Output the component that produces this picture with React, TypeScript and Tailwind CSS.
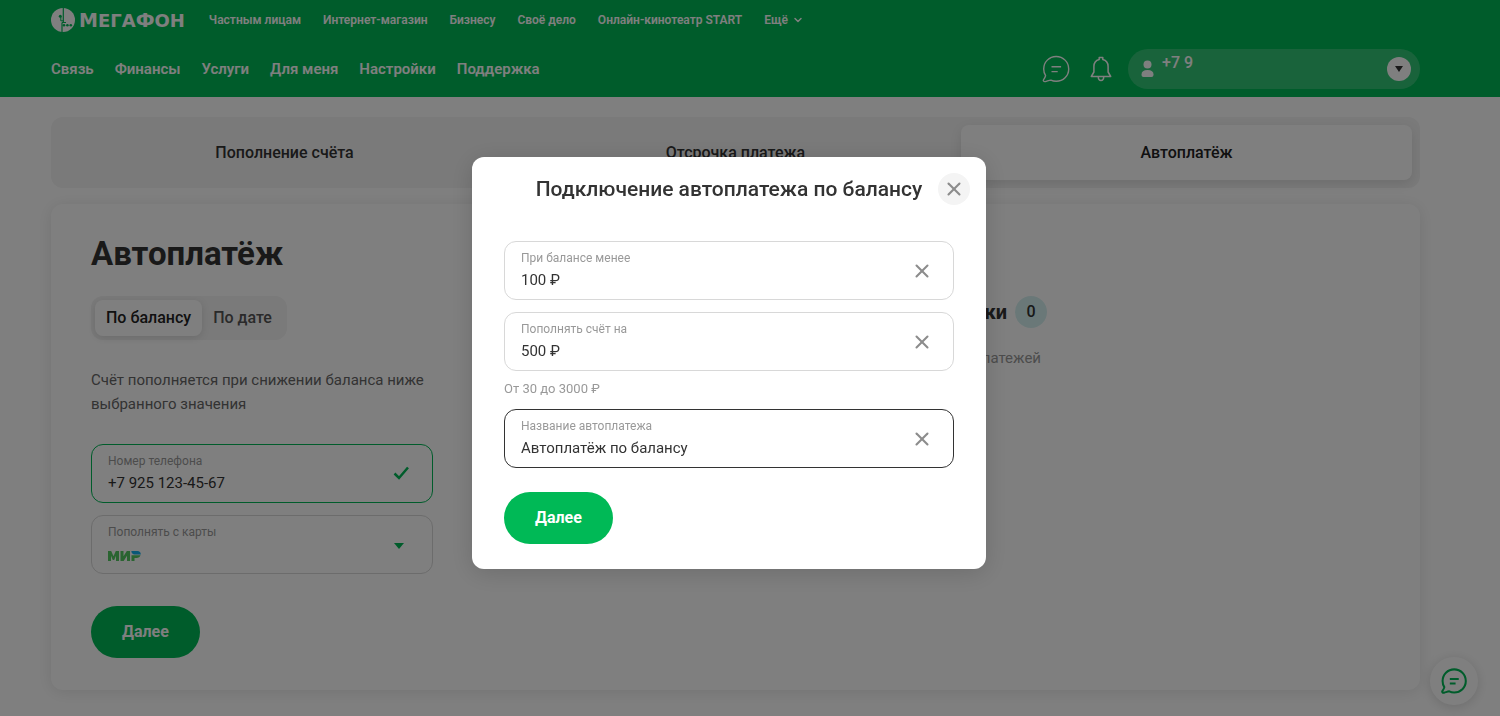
import { useState } from "react";
import { ChevronDown, X } from "lucide-react";

const siteLinks = [
  "Частным лицам",
  "Интернет-магазин",
  "Бизнесу",
  "Своё дело",
  "Онлайн-кинотеатр START",
];

const sections = [
  "Связь",
  "Финансы",
  "Услуги",
  "Для меня",
  "Настройки",
  "Поддержка",
];

const tabs = ["Пополнение счёта", "Отсрочка платежа", "Автоплатёж"];

function Logo() {
  return (
    <a href="#" aria-label="МегаФон" className="flex items-center gap-1 text-white">
      <svg viewBox="0 0 24 24" className="size-6">
        <circle cx="12" cy="12" r="12" fill="#fff" />
        <path
          d="M12.300 0v14.500M11 14.500v9.500M11 14.500h4"
          stroke="#00b956"
          strokeWidth="1.2"
          fill="none"
        />
        <circle cx="9.300" cy="8.300" r="1.500" fill="#00b956" />
        <path d="M9.800 9v3.800h2.500" stroke="#00b956" strokeWidth="1" fill="none" />
        <circle cx="13" cy="17.200" r="1.300" fill="#00b956" />
        <circle cx="16.400" cy="17.200" r="1.300" fill="#00b956" />
        <circle cx="19.800" cy="17.200" r="1.300" fill="#00b956" />
      </svg>
      <span className="font-['DejaVu_Sans',sans-serif] text-lg leading-6 font-bold">
        <span className="text-[19px] leading-6">М</span>ЕГА
        <span className="text-[19px] leading-6">Ф</span>ОН
      </span>
    </a>
  );
}

function ChatIcon({ className, strokeWidth }: { className: string; strokeWidth: number }) {
  return (
    <svg
      viewBox="0 0 28 28"
      className={className}
      fill="none"
      stroke="currentColor"
      strokeWidth={strokeWidth}
      strokeLinejoin="round"
    >
      <path d="M3.600 20.600C2.200 18.700 1.700 16.500 1.700 14 1.700 7 7.200 1.500 14.200 1.500S26.700 7 26.700 14 21.200 26.300 14.200 26.300c-1.900 0-3.700-.4-5.300-1.200-1.800.2-3.600 1-5.600 1.500-1.500.3-2.500-.9-1.700-2 .9-1.200 1.600-2.300 2-4Z" />
      <path d="M9.500 11.800h9.600M9.500 16.600h6.200" />
    </svg>
  );
}

function BellIcon() {
  return (
    <svg
      viewBox="0 0 22 26"
      className="h-[26px] w-[22px]"
      fill="none"
      stroke="currentColor"
      strokeWidth="1.5"
      strokeLinejoin="round"
    >
      <path d="M9.200 3.500V1.500h3.600v2c3.200.8 5.300 3.500 5.300 7v5.500l2.600 4.500H1.300L3.900 16v-5.500c0-3.500 2.100-6.200 5.300-7Z" />
      <path d="M8.300 20.800c0 2.300 1 3.700 2.700 3.700s2.700-1.400 2.700-3.700" />
    </svg>
  );
}

function MirLogo() {
  return (
    <svg viewBox="0 0 33 10" className="h-[10px] w-[33px]">
      <path
        d="M0 10V0h3.200l2.300 5.300L7.800 0H11v10H8V4.800L6.200 9H4.800L3 4.800V10ZM12.500 10V0h3v5.200L18.800 0H22v10h-3V4.800L15.700 10ZM23.500 10V4.300h9c-.6 1.700-2 2.700-4 2.700h-2v3Z"
        fill="#55c862"
      />
      <path d="M23.300 0h6.200c2 0 3.300 1.400 3.300 3.600h-6.300c-1.700 0-3-1.500-3.200-3.600Z" fill="#12b0ee" />
    </svg>
  );
}

interface ModalFieldProps {
  id: string;
  label: string;
  value: string;
  active?: boolean;
  onChange: (value: string) => void;
}

function ModalField({ id, label, value, active, onChange }: ModalFieldProps) {
  return (
    <div
      className={`flex h-[59px] items-center rounded-xl border pr-[18px] pl-4 ${
        active ? "border-[#333333]" : "border-[#d8d8d8]"
      }`}
    >
      <div className="flex-1">
        <label htmlFor={id} className="mb-0.5 block text-xs leading-4 text-[#999999]">
          {label}
        </label>
        <input
          id={id}
          type="text"
          value={value}
          onChange={(e) => onChange(e.target.value)}
          className="block h-6 w-full text-[15px] text-[#333333] outline-none"
        />
      </div>
      <button
        type="button"
        aria-label="Очистить"
        onClick={() => onChange("")}
        className="p-0.5 text-[#8c8c8c]"
      >
        <X className="size-[22px]" strokeWidth={2.25} />
      </button>
    </div>
  );
}

export default function App() {
  const [mode, setMode] = useState("balance");
  const [open, setOpen] = useState(true);
  const [phone, setPhone] = useState("+7 925 123-45-67");
  const [threshold, setThreshold] = useState("100 ₽");
  const [amount, setAmount] = useState("500 ₽");
  const [name, setName] = useState("Автоплатёж по балансу");

  return (
    <div className="min-h-screen bg-white font-['Roboto',sans-serif] text-[#333333]">
      <header className="bg-[#00b956] pr-20 pl-[51px] text-white">
        <div className="flex h-10 items-center gap-6">
          <Logo />
          <nav className="flex items-center gap-[22px] text-xs font-semibold">
            {siteLinks.map((link) => (
              <a key={link} href="#">
                {link}
              </a>
            ))}
            <button type="button" className="flex items-center gap-1">
              Ещё
              <ChevronDown className="size-3" strokeWidth={3} />
            </button>
          </nav>
        </div>

        <div className="flex h-[57px] items-center justify-between">
          <nav className="flex gap-[21px] pt-0.5 text-[15px] font-semibold">
            {sections.map((section) => (
              <a key={section} href="#">
                {section}
              </a>
            ))}
          </nav>
          <div className="flex items-center">
            <button type="button" aria-label="Чат">
              <ChatIcon className="size-7" strokeWidth={1.4} />
            </button>
            <button type="button" aria-label="Уведомления" className="ml-5">
              <BellIcon />
            </button>
            <button
              type="button"
              className="ml-4 flex h-10 w-[292px] items-center rounded-full bg-white/20 pr-[9px] pl-3"
            >
              <svg viewBox="0 0 14 18" className="h-[18px] w-[14px]" fill="currentColor">
                <circle cx="7.500" cy="4.500" r="4" />
                <path d="M1.500 14.500C1.500 11.500 3.500 10 7.500 10s6 1.500 6 4.500c0 1.700-.8 2.500-2 2.500h-8c-1.200 0-2-.8-2-2.500Z" />
              </svg>
              <span className="mb-3 ml-2 flex-1 text-left text-base font-medium">+7 9</span>
              <span className="flex size-6 items-center justify-center rounded-full bg-white">
                <svg viewBox="0 0 8 6" className="h-1.5 w-2" fill="#333333">
                  <path d="M0 0h8L4 6Z" />
                </svg>
              </span>
            </button>
          </div>
        </div>
      </header>

      <main className="pt-5 pr-20 pb-6 pl-[51px]">
        <div role="tablist" className="grid grid-cols-3 rounded-xl bg-[#f4f4f4] p-2">
          {tabs.map((tab) => (
            <button
              key={tab}
              role="tab"
              type="button"
              aria-selected={tab === "Автоплатёж"}
              className="h-[55px] rounded-lg text-base font-medium aria-selected:bg-white aria-selected:text-[#222222] aria-selected:shadow-[0_4px_12px_rgba(0,0,0,0.10)]"
            >
              {tab}
            </button>
          ))}
        </div>

        <section className="mt-4 flex rounded-xl bg-white px-10 py-8 shadow-[0_2px_16px_rgba(0,0,0,0.10)]">
          <div className="w-[342px]">
            <h1 className="text-[33px] leading-9 font-bold">Автоплатёж</h1>

            <div className="mt-6 inline-flex rounded-xl bg-[#f4f4f4] p-1">
              <button
                type="button"
                onClick={() => setMode("balance")}
                className={`h-9 rounded-lg px-[11px] text-base font-medium ${
                  mode === "balance"
                    ? "bg-white text-[#222222] shadow-[0_2px_8px_rgba(0,0,0,0.12)]"
                    : "text-[#555555]"
                }`}
              >
                По балансу
              </button>
              <button
                type="button"
                onClick={() => setMode("date")}
                className={`h-9 rounded-lg px-[11px] text-base font-medium ${
                  mode === "date"
                    ? "bg-white text-[#222222] shadow-[0_2px_8px_rgba(0,0,0,0.12)]"
                    : "text-[#555555]"
                }`}
              >
                По дате
              </button>
            </div>

            <p className="mt-7 text-[15px] leading-6 text-[#666666]">
              Счёт пополняется при снижении баланса ниже выбранного значения
            </p>

            <div className="mt-7 flex h-[59px] items-center rounded-xl border border-[#00b956] pr-5 pl-4">
              <div className="flex-1">
                <label htmlFor="phone" className="mb-0.5 block text-xs leading-4 text-[#999999]">
                  Номер телефона
                </label>
                <input
                  id="phone"
                  type="tel"
                  value={phone}
                  onChange={(e) => setPhone(e.target.value)}
                  className="block h-6 w-full text-[15px] outline-none"
                />
              </div>
              <svg viewBox="0 0 20 20" className="size-5" fill="none" stroke="#00b956" strokeWidth="2.500">
                <path d="m2.500 9.500 4.500 4.500L16 3.500" />
              </svg>
            </div>

            <div className="relative mt-3 h-[59px] rounded-xl border border-[#d8d8d8] px-4 pt-2">
              <label htmlFor="card" className="block text-xs leading-4 text-[#999999]">
                Пополнять с карты
              </label>
              <select
                id="card"
                className="block h-6 w-full appearance-none text-[15px] text-transparent outline-none"
              >
                <option>МИР</option>
              </select>
              <span className="pointer-events-none absolute bottom-3 left-4 flex">
                <MirLogo />
              </span>
              <svg
                viewBox="0 0 10 6"
                className="pointer-events-none absolute right-7 bottom-6 h-1.5 w-2.5"
                fill="#00b956"
              >
                <path d="M0 0h10L5 6Z" />
              </svg>
            </div>

            <button
              type="button"
              onClick={() => setOpen(true)}
              className="mt-8 h-[52px] rounded-full bg-[#00b956] px-[31px] text-base font-bold text-white"
            >
              Далее
            </button>
          </div>

          <div className="flex w-[614px] flex-col items-end pt-[60px]">
            <h2 className="flex items-center gap-2 text-xl font-bold">
              Мои заявки
              <span className="flex size-8 items-center justify-center rounded-full bg-[#d5f1f1] text-base font-medium">
                0
              </span>
            </h2>
            <p className="mt-[18px] pr-1.5 text-[15px] leading-6 text-[#999999]">Нет автоплатежей</p>
          </div>
        </section>
      </main>

      <button
        type="button"
        aria-label="Помощь"
        className="fixed right-[22px] bottom-[11px] flex size-12 items-center justify-center rounded-full bg-white text-[#00b956] shadow-[0_2px_12px_rgba(0,0,0,0.15)]"
      >
        <ChatIcon className="size-[26px]" strokeWidth={2.2} />
      </button>

      {open && (
        <div className="fixed inset-0 flex items-start justify-center bg-black/50 pt-[157px] pr-[42px]">
          <div
            role="dialog"
            aria-labelledby="modal-title"
            className="relative w-[514px] rounded-xl bg-white px-8 pt-4 pb-[25px] shadow-[0_4px_24px_rgba(0,0,0,0.15)]"
          >
            <h2 id="modal-title" className="text-center text-[21px] leading-8 font-medium">
              Подключение автоплатежа по балансу
            </h2>
            <button
              type="button"
              aria-label="Закрыть"
              onClick={() => setOpen(false)}
              className="absolute top-4 right-4 flex size-8 items-center justify-center rounded-full bg-[#f4f4f4] text-[#8c8c8c]"
            >
              <X className="size-[22px]" strokeWidth={2.25} />
            </button>

            <form className="mt-9" onSubmit={(e) => e.preventDefault()}>
              <div className="flex flex-col gap-3">
                <ModalField
                  id="threshold"
                  label="При балансе менее"
                  value={threshold}
                  onChange={setThreshold}
                />
                <ModalField
                  id="amount"
                  label="Пополнять счёт на"
                  value={amount}
                  onChange={setAmount}
                />
              </div>
              <p className="mt-2 mb-2.5 text-[13px] leading-5 text-[#999999]">От 30 до 3000 ₽</p>
              <ModalField
                id="name"
                label="Название автоплатежа"
                value={name}
                active
                onChange={setName}
              />
              <button
                type="submit"
                className="mt-6 h-[52px] rounded-full bg-[#00b956] px-[31px] text-base font-bold text-white"
              >
                Далее
              </button>
            </form>
          </div>
        </div>
      )}
    </div>
  );
}
